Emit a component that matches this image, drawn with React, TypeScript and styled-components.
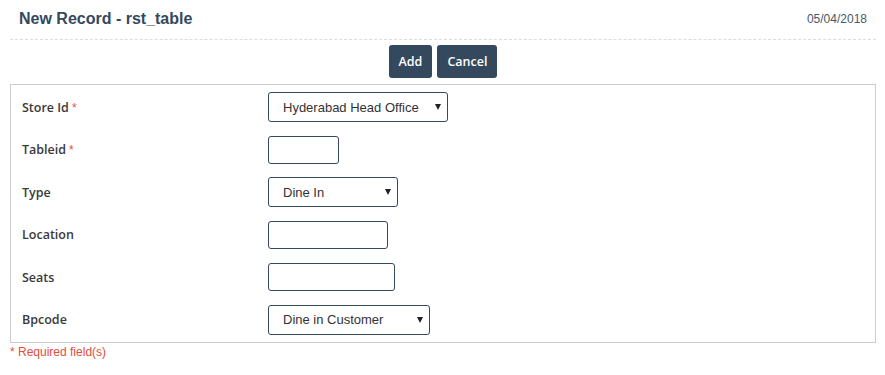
import React from 'react';
import styled, {createGlobalStyle} from 'styled-components';

const Global = createGlobalStyle`
	* {
		box-sizing: border-box;
	}
	body {
		margin: 0;
		background: #fff;
		font-family: 'Liberation Sans', Arial, sans-serif;
		color: #34495e;
	}
`;

const Page = styled.div`
	width: 885px;
	padding: 0 9px 0 10px;
`;

const Header = styled.div`
	display: flex;
	justify-content: space-between;
	align-items: center;
	height: 40px;
	padding: 0 9px 0 9px;
	border-bottom: 1px dashed #dcdcdc;
`;

const Title = styled.h1`
	margin: 0;
	font-size: 16px;
	font-weight: 700;
	color: #34495e;
	padding-bottom: 1px;
`;

const DateText = styled.span`
	font-size: 12px;
	color: #4a5866;
	padding-bottom: 1px;
`;

const Toolbar = styled.div`
	display: flex;
	justify-content: center;
	gap: 5px;
	padding: 5px 0 6px;
`;

const Button = styled.button`
	height: 33px;
	padding: 0 10px;
	border: none;
	border-radius: 3px;
	background: #34495e;
	color: #fff;
	font-family: 'Open Sans', sans-serif;
	font-weight: 600;
	font-size: 12.5px;
	cursor: pointer;
`;

const FormBox = styled.div`
	border: 1px solid #cccccc;
	padding: 7px 11px 7px 11px;
	display: grid;
	grid-template-columns: 246px 1fr;
	grid-auto-rows: 30px;
	row-gap: 12.6px;
	align-items: center;
`;

const Label = styled.label`
	font-family: 'Open Sans', sans-serif;
	font-weight: 600;
	font-size: 12.5px;
	color: #3a3a3a;
`;

const Star = styled.span`
	color: #e74c3c;
	margin-left: 3px;
	font-family: 'Liberation Sans', Arial, sans-serif;
	font-weight: 400;
	font-size: 12px;
`;

const Input = styled.input<{$w: number}>`
	width: ${p => p.$w}px;
	height: 28px;
	border: 1px solid #34495e;
	border-radius: 3px;
	font-family: 'Liberation Sans', Arial, sans-serif;
	font-size: 13px;
	padding: 0 8px;
	outline: none;
`;

const SelectWrap = styled.div<{$w: number}>`
	position: relative;
	width: ${p => p.$w}px;
	height: 30px;
	&::after {
		content: '';
		position: absolute;
		right: 7px;
		top: 12px;
		border-left: 3.5px solid transparent;
		border-right: 3.5px solid transparent;
		border-top: 6px solid #222;
		pointer-events: none;
	}
`;

const Select = styled.select`
	appearance: none;
	width: 100%;
	height: 100%;
	border: 1px solid #34495e;
	border-radius: 3px;
	background: #fff;
	font-family: 'Liberation Sans', Arial, sans-serif;
	font-size: 13px;
	color: #333;
	padding: 0 0 0 14px;
	outline: none;
`;

const Note = styled.div`
	color: #e74c3c;
	font-size: 12px;
	padding-top: 2px;
`;

type Field =
	| {label: string; required?: boolean; kind: 'input'; width: number}
	| {label: string; required?: boolean; kind: 'select'; width: number; value: string};

const fields: Field[] = [
	{label: 'Store Id', required: true, kind: 'select', width: 180, value: 'Hyderabad Head Office'},
	{label: 'Tableid', required: true, kind: 'input', width: 71},
	{label: 'Type', kind: 'select', width: 130, value: 'Dine In'},
	{label: 'Location', kind: 'input', width: 120},
	{label: 'Seats', kind: 'input', width: 127},
	{label: 'Bpcode', kind: 'select', width: 162, value: 'Dine in Customer'},
];

export default function App() {
	return (
		<Page>
			<Global />
			<Header>
				<Title>New Record - rst_table</Title>
				<DateText>05/04/2018</DateText>
			</Header>
			<Toolbar>
				<Button>Add</Button>
				<Button>Cancel</Button>
			</Toolbar>
			<FormBox>
				{fields.map(f => (
					<React.Fragment key={f.label}>
						<Label>
							{f.label}
							{f.required && <Star>*</Star>}
						</Label>
						{f.kind === 'select' ? (
							<SelectWrap $w={f.width}>
								<Select defaultValue={f.value}>
									<option>{f.value}</option>
								</Select>
							</SelectWrap>
						) : (
							<Input $w={f.width} />
						)}
					</React.Fragment>
				))}
			</FormBox>
			<Note>* Required field(s)</Note>
		</Page>
	);
}
